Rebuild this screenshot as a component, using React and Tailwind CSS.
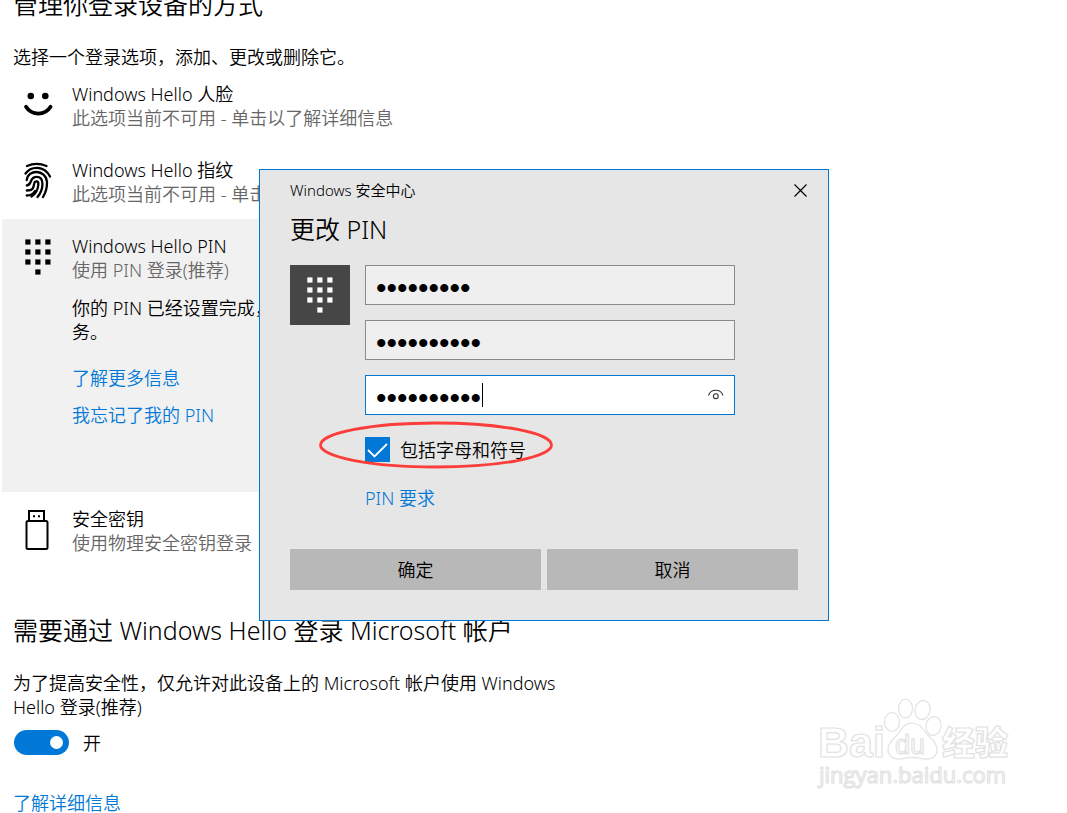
import { useState } from "react";

function FaceIcon() {
  return (
    <svg width="32" height="44" viewBox="0 0 32 44" fill="none">
      <circle cx="8.8" cy="14" r="3.3" fill="#000" />
      <circle cx="23.3" cy="14" r="3.3" fill="#000" />
      <path
        d="M4 24.8A14.6 14.6 0 0 0 28.6 24.8"
        stroke="#000"
        strokeWidth="3.8"
        strokeLinecap="round"
      />
    </svg>
  );
}

function FingerprintIcon() {
  return (
    <svg
      width="32"
      height="44"
      viewBox="0 0 32 44"
      fill="none"
      stroke="#000"
      strokeWidth="2.3"
      strokeLinecap="round"
    >
      <path d="M5 8Q14.5 3.8 24.5 8" />
      <path d="M3.5 15.5C9 8 22 7 28 18.5" />
      <path d="M4.8 22C5.5 11 24 11 25 24C25.2 30 23.5 35 21 39" />
      <path d="M4.8 27.5C10.5 27 7 18.8 14.7 18.8C22.5 18.8 22 31 15.5 39" />
      <path d="M4.8 32.5C12 32.5 11.5 28.5 12.2 25.5C12.8 22.5 16.5 22.8 16.4 26C16 32 13 36.5 9.5 38.5" />
      <path d="M4.8 37.5C9 37.5 11.5 35.5 13 33" />
    </svg>
  );
}

const keys = [
  [0, 0], [10, 0], [20, 0],
  [0, 10], [10, 10], [20, 10],
  [0, 20], [10, 20], [20, 20],
  [10, 30],
];

function KeypadIcon({ color }) {
  return (
    <svg width="26" height="36" viewBox="0 0 26 36" fill={color}>
      {keys.map(([x, y]) => (
        <rect key={`${x}-${y}`} x={x + 0.3} y={y + 0.4} width="5.2" height="5.2" />
      ))}
    </svg>
  );
}

function UsbIcon() {
  return (
    <svg width="32" height="44" viewBox="0 0 32 44" fill="none" stroke="#000" strokeWidth="2">
      <path d="M7 13V4H22V13" />
      <rect x="4.5" y="14" width="21" height="28" rx="1.5" />
      <path d="M11 9.2H13M16 9.2H18" />
    </svg>
  );
}

function Option({ icon, title, note, active, children }) {
  return (
    <li className={`ml-0.5 flex pl-5 pt-[15px] ${active ? "bg-[#f1f1f1] pb-[65px]" : "pb-[13px]"}`}>
      <div className="w-[50px] shrink-0">{icon}</div>
      <div>
        <h2>{title}</h2>
        <p className="text-[#666]">{note}</p>
        {children}
      </div>
    </li>
  );
}

function PinField({ label, value, onChange, active }) {
  return (
    <div className="relative">
      <input
        type="password"
        aria-label={label}
        value={value}
        onChange={(e) => onChange(e.target.value)}
        className={`block h-10 w-full border pt-1.5 pr-10 pl-2.5 font-['Liberation_Serif',serif] text-[30px] leading-8 font-bold text-black outline-none ${
          active ? "border-[#0078d7] bg-white" : "border-[#8a8a8a] bg-[#efefef]"
        }`}
      />
      {active && (
        <>
          <span className="absolute top-2 left-[117px] h-6 w-px bg-black" />
          <button type="button" aria-label="显示 PIN" className="absolute top-3 right-2.5">
            <svg width="18" height="16" viewBox="0 0 18 16" fill="none" stroke="#333" strokeWidth="1.1">
              <path d="M1.5 8.5C3.5 1.5 14 1.5 16 8.5" />
              <circle cx="8.8" cy="9.2" r="2.4" />
            </svg>
          </button>
        </>
      )}
    </div>
  );
}

function PinDialog() {
  const [oldPin, setOldPin] = useState("a12345678");
  const [newPin, setNewPin] = useState("b123456789");
  const [confirmPin, setConfirmPin] = useState("b123456789");
  const [symbols, setSymbols] = useState(true);

  return (
    <div
      role="dialog"
      aria-labelledby="dialog-title"
      className="absolute top-[169px] left-[259px] w-[570px] border border-[#0078d7] bg-[#e6e6e6] px-[30px] pb-[30px]"
    >
      <div className="flex h-10 items-center justify-between text-[15px]">
        <span>Windows 安全中心</span>
        <button type="button" aria-label="关闭" className="-mr-4 p-1.5">
          <svg width="15" height="15" viewBox="0 0 15 15" stroke="#000" strokeWidth="1.2">
            <path d="M1.5 1.5L13.5 13.5M13.5 1.5L1.5 13.5" />
          </svg>
        </button>
      </div>
      <h2 id="dialog-title" className="text-[25px] leading-[38px]">
        更改 PIN
      </h2>

      <div className="mt-[17px] flex gap-[15px]">
        <div className="flex size-[60px] shrink-0 items-center justify-center bg-[#464646]">
          <KeypadIcon color="#fff" />
        </div>
        <div className="w-[370px]">
          <div className="flex flex-col gap-[15px]">
            <PinField label="PIN" value={oldPin} onChange={setOldPin} />
            <PinField label="新的 PIN" value={newPin} onChange={setNewPin} />
            <PinField label="确认 PIN" value={confirmPin} onChange={setConfirmPin} active />
          </div>

          <div className="relative mt-[22px] flex w-fit items-center">
            <input
              id="symbols"
              type="checkbox"
              checked={symbols}
              onChange={(e) => setSymbols(e.target.checked)}
              className="peer size-[25px] appearance-none border-2 border-[#333] checked:border-0 checked:bg-[#0078d7]"
            />
            <svg
              className="pointer-events-none absolute top-0 left-0 hidden peer-checked:block"
              width="25"
              height="25"
              viewBox="0 0 25 25"
              fill="none"
              stroke="#fff"
              strokeWidth="1.8"
            >
              <path d="M3 13L9.5 19.5L22 7" />
            </svg>
            <label htmlFor="symbols" className="pl-2.5">
              包括字母和符号
            </label>
            {/* Highlight ring */}
            <svg
              className="pointer-events-none absolute -top-4 -left-[47px]"
              width="236"
              height="48"
              viewBox="0 0 236 48"
              fill="none"
              stroke="#fc3d39"
              strokeWidth="2.8"
            >
              <ellipse cx="118" cy="24" rx="115.5" ry="22" />
            </svg>
          </div>

          <a href="#requirements" className="mt-6 block w-fit text-[#0078d7]">
            PIN 要求
          </a>
        </div>
      </div>

      <div className="mt-[39px] grid grid-cols-2 gap-1.5">
        <button type="button" className="h-[41px] bg-[#b8b8b8]">
          确定
        </button>
        <button type="button" className="h-[41px] bg-[#b8b8b8]">
          取消
        </button>
      </div>
    </div>
  );
}

function Watermark() {
  return (
    <svg
      className="pointer-events-none absolute top-[694px] left-[814px]"
      width="204"
      height="100"
      viewBox="0 0 204 100"
      fill="#fff"
      stroke="#e2e2e2"
      strokeWidth="1.2"
    >
      <text x="4" y="63" fontSize="43" fontWeight="700" className="font-['Liberation_Sans',sans-serif]">
        Bai
      </text>
      <ellipse cx="78" cy="28" rx="7.5" ry="9.5" />
      <ellipse cx="91.5" cy="14.5" rx="7" ry="9.5" />
      <ellipse cx="108.5" cy="16" rx="7.5" ry="9.5" transform="rotate(12 108.5 16)" />
      <ellipse cx="119.5" cy="32" rx="7.5" ry="9.5" transform="rotate(10 119.5 32)" />
      <path d="M98 29C105 29 109 34 112 39C116 44 123 48 123 56C123 63 117 66 110 65C102 63 94 63 87 65C79 66 74 62 74 55C74 48 80 45 84 40C88 34 91 29 98 29Z" />
      <text x="81" y="60" fontSize="27" className="font-['Liberation_Sans',sans-serif]">
        du
      </text>
      <text x="128" y="61" fontSize="33" fontWeight="900" className="font-['Noto_Sans_CJK_SC',sans-serif]">
        经验
      </text>
      <text x="5" y="89" fontSize="22" fontWeight="400" className="font-['Open_Sans',sans-serif]">
        jingyan.baidu.com
      </text>
    </svg>
  );
}

function App() {
  const [required, setRequired] = useState(true);

  return (
    <div className="relative h-screen overflow-hidden bg-white font-['Noto_Sans','Noto_Sans_CJK_SC',sans-serif] text-lg leading-6 font-[350] text-black">
      <main className="max-w-[600px]">
        <h1 className="-mt-3 pl-[13px] text-[25px] leading-8">管理你登录设备的方式</h1>
        <p className="mt-[27px] pl-[13px] leading-5">选择一个登录选项，添加、更改或删除它。</p>

        <ul>
          <Option
            icon={<FaceIcon />}
            title="Windows Hello 人脸"
            note="此选项当前不可用 - 单击以了解详细信息"
          />
          <Option
            icon={<FingerprintIcon />}
            title="Windows Hello 指纹"
            note="此选项当前不可用 - 单击以了解详细信息"
          />
          <Option
            active
            icon={
              <div className="pt-[5px] pl-[3px]">
                <KeypadIcon color="#000" />
              </div>
            }
            title="Windows Hello PIN"
            note="使用 PIN 登录(推荐)"
          >
            <p className="mt-3.5">
              你的 PIN 已经设置完成，
              <br />
              务。
            </p>
            <a href="#more" className="mt-[22px] block w-fit text-[#0078d7]">
              了解更多信息
            </a>
            <a href="#forgot" className="mt-[13px] block w-fit text-[#0078d7]">
              我忘记了我的 PIN
            </a>
          </Option>
          <Option icon={<UsbIcon />} title="安全密钥" note="使用物理安全密钥登录" />
        </ul>

        <section className="mt-[46px] pl-[13px]">
          <h1 className="text-[25px] leading-8">需要通过 Windows Hello 登录 Microsoft 帐户</h1>
          <p className="mt-[25px]">
            为了提高安全性，仅允许对此设备上的 Microsoft 帐户使用 Windows
            <br />
            Hello 登录(推荐)
          </p>
          <label className="mt-[11px] ml-px flex w-fit items-center gap-3.5">
            <span className="relative block h-[25px] w-[55px]">
              <input
                type="checkbox"
                role="switch"
                checked={required}
                onChange={(e) => setRequired(e.target.checked)}
                className="peer block h-full w-full appearance-none rounded-full bg-[#999] checked:bg-[#0078d7]"
              />
              <span className="pointer-events-none absolute top-1.5 left-1.5 size-[13px] rounded-full bg-white peer-checked:left-9" />
            </span>
            {required ? "开" : "关"}
          </label>
          <a href="#details" className="mt-9 block w-fit text-[#0078d7]">
            了解详细信息
          </a>
        </section>
      </main>

      <PinDialog />
      <Watermark />
    </div>
  );
}

export default App;
